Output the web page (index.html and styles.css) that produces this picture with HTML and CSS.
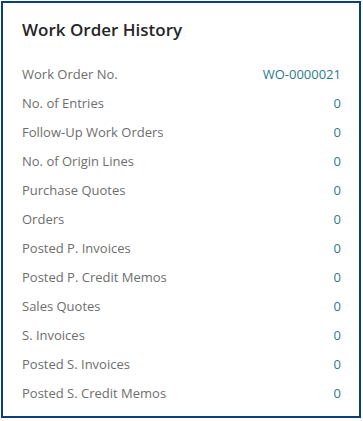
FILE: index.html
```html
<!DOCTYPE html>
<html>
<head>
<meta charset="utf-8">
<link rel="stylesheet" href="styles.css">
</head>
<body>
<div class="card">
  <h1 class="title">Work Order History</h1>
  <div class="rows">
    <div class="row"><span class="label">Work Order No.</span><span class="value">WO-0000021</span></div>
    <div class="row"><span class="label">No. of Entries</span><span class="value">0</span></div>
    <div class="row"><span class="label">Follow-Up Work Orders</span><span class="value">0</span></div>
    <div class="row"><span class="label">No. of Origin Lines</span><span class="value">0</span></div>
    <div class="row"><span class="label">Purchase Quotes</span><span class="value">0</span></div>
    <div class="row"><span class="label">Orders</span><span class="value">0</span></div>
    <div class="row"><span class="label">Posted P. Invoices</span><span class="value">0</span></div>
    <div class="row"><span class="label">Posted P. Credit Memos</span><span class="value">0</span></div>
    <div class="row"><span class="label">Sales Quotes</span><span class="value">0</span></div>
    <div class="row"><span class="label">S. Invoices</span><span class="value">0</span></div>
    <div class="row"><span class="label">Posted S. Invoices</span><span class="value">0</span></div>
    <div class="row"><span class="label">Posted S. Credit Memos</span><span class="value">0</span></div>
  </div>
</div>
</body>
</html>
```

FILE: styles.css
```css
html, body {
  margin: 0;
  padding: 0;
  background: #ffffff;
}
body {
  padding: 1px;
  font-family: "Open Sans", "Noto Sans", sans-serif;
}
.card {
  width: 356px;
  height: 413px;
  border: 2px solid #0b3f78;
  box-sizing: content-box;
  padding: 0;
  display: flex;
  flex-direction: column;
}
.title {
  margin: 0;
  padding: 15px 0 0 19px;
  font-size: 17px;
  font-weight: 600;
  color: #262626;
  line-height: 23px;
}
.rows {
  display: flex;
  flex-direction: column;
  padding: 18px 18px 0 19px;
}
.row {
  display: flex;
  justify-content: space-between;
  align-items: center;
  height: 29px;
  font-size: 13px;
}
.label {
  color: #6e6e6e;
}
.value {
  color: #2b7b8b;
}
```
